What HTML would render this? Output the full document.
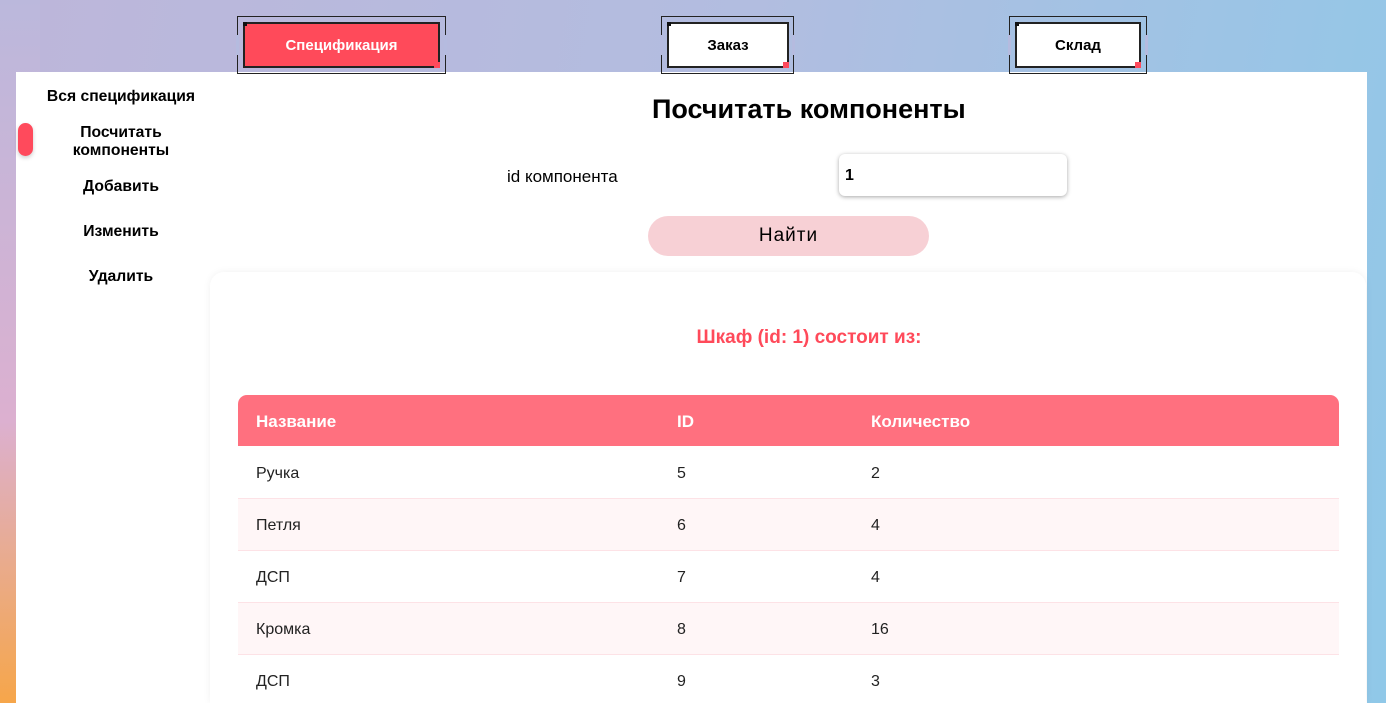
<!DOCTYPE html>
<html style="width:1386px;height:703px;overflow:hidden"><head><meta charset="utf-8"><style>
*{margin:0;padding:0;box-sizing:border-box}
body{width:1386px;height:703px;overflow:hidden;position:relative;font-family:"Liberation Sans",sans-serif;
background:linear-gradient(100deg,#bdb6da 0%,#b2bde0 50%,#90c8e8 100%);}
.bgl{position:absolute;left:0;top:0;width:40px;height:703px;background:linear-gradient(180deg,#bbb8dc 0%,#dcb0d0 60%,#f6a64a 100%)}
.panel{position:absolute;left:16px;top:72px;width:1351px;height:631px;background:#fff}
.frame{position:absolute;border:1px solid #222}
.frame .g{position:absolute;width:3px;height:20px;top:18px;background:#b5bbdf}
.btn{position:absolute;border:2px solid #222;background:#fff;font-weight:bold;font-size:15px;text-align:center;line-height:44px;color:#000}
.btn:after{content:"";position:absolute;right:-2px;bottom:-2px;width:6px;height:6px;background:#ff4a5c}
.btn:before{content:"";position:absolute;left:-2px;top:-2px;width:4px;height:4px;background:#111}
.side{position:absolute;left:16px;width:210px;text-align:center;font-weight:bold;font-size:15.7px;color:#000;line-height:18px}
.row{position:absolute;left:238px;width:1101px;height:52px;border-bottom:1px solid #fde2e6;font-size:16px;color:#222}
.row span,.hd span{position:absolute;top:18px}
</style></head><body>
<div class="bgl"></div>
<div class="panel"></div>
<div style="position:absolute;left:18px;top:123px;width:15px;height:33px;border-radius:8px;background:#ff4a5c;box-shadow:0 2px 4px rgba(0,0,0,.2)"></div>

<div class="frame" style="left:237px;top:16px;width:209px;height:58px"><div class="g" style="left:-2px"></div><div class="g" style="right:-2px"></div></div>
<div class="btn" style="left:243px;top:22px;width:197px;height:46px;background:#ff4a5a;color:#fff">Спецификация</div>
<div class="frame" style="left:661px;top:16px;width:133px;height:58px"><div class="g" style="left:-2px"></div><div class="g" style="right:-2px"></div></div>
<div class="btn" style="left:667px;top:22px;width:122px;height:46px">Заказ</div>
<div class="frame" style="left:1009px;top:16px;width:138px;height:58px"><div class="g" style="left:-2px"></div><div class="g" style="right:-2px"></div></div>
<div class="btn" style="left:1015px;top:22px;width:126px;height:46px">Склад</div>

<div class="side" style="top:88px">Вся спецификация</div>
<div class="side" style="top:124px">Посчитать<br>компоненты</div>
<div class="side" style="top:178px">Добавить</div>
<div class="side" style="top:223px">Изменить</div>
<div class="side" style="top:268px">Удалить</div>

<div style="position:absolute;left:652px;top:94px;font-size:27px;font-weight:bold">Посчитать компоненты</div>
<div style="position:absolute;left:507px;top:167px;font-size:17px">id компонента</div>
<div style="position:absolute;left:839px;top:154px;width:228px;height:42px;border-radius:6px;background:#fff;box-shadow:0 1px 4px rgba(0,0,0,.35);font-weight:bold;font-size:16px;padding:13px 6px">1</div>
<div style="position:absolute;left:648px;top:216px;width:281px;height:40px;border-radius:20px;background:#f7d0d5;text-align:center;line-height:40px;font-size:19px;letter-spacing:1px">Найти</div>

<div style="position:absolute;left:210px;top:272px;width:1156px;height:431px;border-radius:14px 14px 0 0;background:#fff;box-shadow:0 0 8px rgba(0,0,0,.06)"></div>
<div style="position:absolute;left:210px;width:1198px;top:327px;text-align:center;color:#ff4a5a;font-weight:bold;font-size:19px">Шкаф (id: 1) состоит из:</div>

<div class="hd" style="position:absolute;left:238px;top:395px;width:1101px;height:51px;background:#ff707f;border-radius:9px 9px 0 0;color:#fff;font-weight:bold;font-size:17px">
<span style="left:18px;top:17px">Название</span><span style="left:439px;top:17px">ID</span><span style="left:633px;top:17px">Количество</span></div>
<div class="row" style="top:447px"><span style="left:18px">Ручка</span><span style="left:439px">5</span><span style="left:633px">2</span></div>
<div class="row" style="top:499px;background:#fff6f7"><span style="left:18px">Петля</span><span style="left:439px">6</span><span style="left:633px">4</span></div>
<div class="row" style="top:551px"><span style="left:18px">ДСП</span><span style="left:439px">7</span><span style="left:633px">4</span></div>
<div class="row" style="top:603px;background:#fff6f7"><span style="left:18px">Кромка</span><span style="left:439px">8</span><span style="left:633px">16</span></div>
<div class="row" style="top:655px;border:none"><span style="left:18px">ДСП</span><span style="left:439px">9</span><span style="left:633px">3</span></div>
</body></html>
